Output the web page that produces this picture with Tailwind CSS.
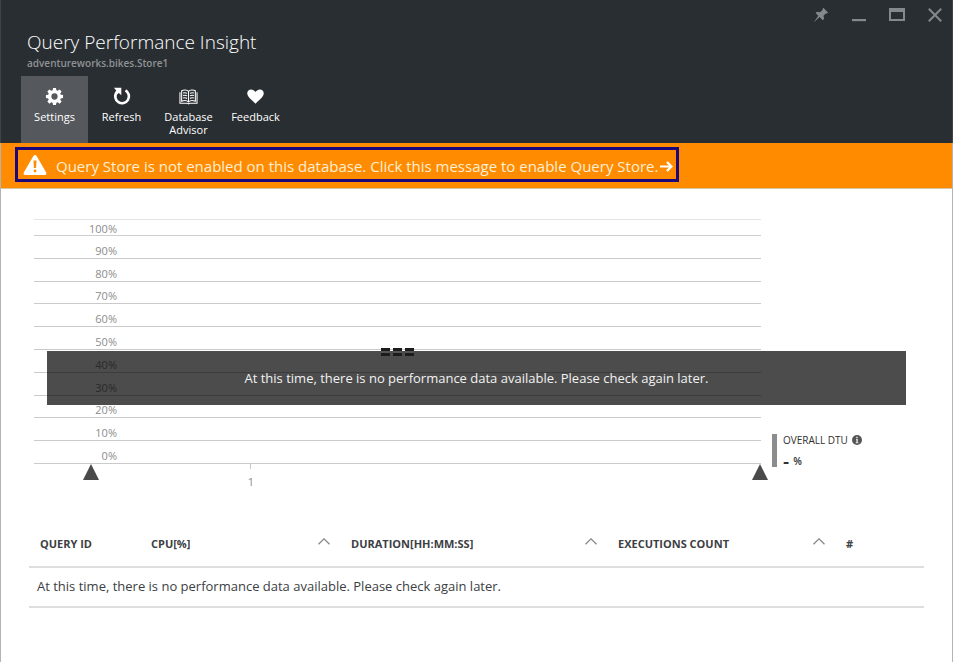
<!DOCTYPE html>
<html lang="en">
<head>
<meta charset="utf-8">
<title>Query Performance Insight</title>
<script src="https://cdn.jsdelivr.net/npm/@tailwindcss/browser@4"></script>
</head>
<body class="flex min-h-screen flex-col bg-white font-['Open_Sans','Noto_Sans',sans-serif] text-[13px] text-[#3c4043]">

<header class="relative border-x border-[#3f4447] bg-[#292e32] pl-5 pt-7 text-white">
  <div class="absolute right-[6px] top-1 flex items-center gap-4 text-[#85898c]">
    <button type="button" aria-label="Pin" class="flex size-[22px] items-center justify-center">
      <svg class="size-4" viewBox="0 0 16 16" fill="currentColor"><path d="M10.300.8 15.200 5.700l-1.500.8-.9-.1-2.300 2.400.6 3-1.300 1.400-3.200-3.200L.6 15.400l4.700-6.600L2.600 6.100 4 4.800l3 .5 2.600-2.400-.1-.9z"/></svg>
    </button>
    <button type="button" aria-label="Minimize" class="flex size-[22px] items-center justify-center">
      <svg class="size-4" viewBox="0 0 16 16" fill="currentColor"><path d="M1 12h14v2.200H1z"/></svg>
    </button>
    <button type="button" aria-label="Maximize" class="flex size-[22px] items-center justify-center">
      <svg class="size-4" viewBox="0 0 16 16" fill="currentColor" fill-rule="evenodd"><path d="M0 1h16v13H0zM2 5v7h12V5z"/></svg>
    </button>
    <button type="button" aria-label="Close" class="flex size-[22px] items-center justify-center">
      <svg class="size-4" viewBox="0 0 16 16" fill="none" stroke="currentColor" stroke-width="2"><path d="m1.800 1.800 12.400 12.400M14.200 1.800 1.800 14.200"/></svg>
    </button>
  </div>
  <h1 class="pl-[6px] text-[19px] font-light leading-7">Query Performance Insight</h1>
  <p class="pl-[6px] text-[10px] font-semibold leading-[14px] text-[#8f9396]">adventureworks.bikes.Store1</p>
  <nav class="mt-[6px] flex text-[11px] leading-[13px]">
    <button type="button" class="flex h-[67px] w-[67px] flex-col items-center gap-1 bg-[#55585c] pt-[11px]">
      <svg class="size-[19px]" viewBox="0 0 20 20" fill="currentColor" fill-rule="evenodd"><path d="M8.500 1h3l.5 2.500 1.300.5 2.100-1.400 2.100 2.100L16 6.800l.6 1.300 2.400.4v3l-2.400.5-.6 1.300 1.500 2-2.100 2.200-2.100-1.400-1.300.5-.5 2.400h-3L8 16.600l-1.300-.5-2.100 1.400-2.100-2.200 1.400-2-.5-1.300L1 11.500v-3l2.400-.4.5-1.300-1.400-2.100 2.100-2.100L6.700 4 8 3.500zM10 6.700a3.300 3.300 0 1 0 0 6.600 3.300 3.300 0 0 0 0-6.600z"/></svg>
      Settings
    </button>
    <button type="button" class="flex h-[67px] w-[67px] flex-col items-center gap-1 pt-[11px]">
      <svg class="size-[19px]" viewBox="0 0 20 20"><path d="M14.200 3.600A7.200 7.200 0 1 1 4.700 5.800" fill="none" stroke="currentColor" stroke-width="2.800"/><path d="M2 .9h7.800v7.800L7.300 6.300 4.900 8.200 2.800 6.200 4.500 3.800z" fill="currentColor"/></svg>
      Refresh
    </button>
    <button type="button" class="flex h-[67px] w-[67px] flex-col items-center gap-1 pt-[11px]">
      <svg class="size-[19px]" viewBox="0 0 20 20" fill="none" stroke="currentColor" stroke-width="1.100"><path d="M10 4.500C8.500 3 5 2.800 2.800 4v11c2.300-1 5.700-.8 7.200.7 1.500-1.500 4.900-1.700 7.200-.7V4C15 2.800 11.500 3 10 4.500zM10 4.500v11.200M1 5.500v11.500h7.500l1.500.7 1.500-.7H19v-11.500M4.300 6.300c1.500-.5 3-.4 4.200.4M4.300 9c1.500-.5 3-.4 4.200.4M4.300 11.700c1.500-.5 3-.4 4.200.4M15.700 6.300c-1.500-.5-3-.4-4.200.4M15.700 9c-1.500-.5-3-.4-4.200.4M15.700 11.700c-1.500-.5-3-.4-4.200.4"/></svg>
      Database Advisor
    </button>
    <button type="button" class="flex h-[67px] w-[67px] flex-col items-center gap-1 pt-[11px]">
      <svg class="size-[19px]" viewBox="0 0 20 20" fill="currentColor"><path d="M10 17.500C7 14.500 1.300 10.800 1.300 6.700 1.300 1.800 7.500 1.100 10 5.200c2.500-4.100 8.700-3.400 8.700 1.500 0 4.100-5.700 7.800-8.700 10.800z"/></svg>
      Feedback
    </button>
  </nav>
</header>

<main class="grow border-x border-[#b4b4b4]">
  <div class="border-b border-[#d9c3a0] bg-[#ff8c00] pb-[6px] pl-[14px] pt-1">
    <a href="#" class="inline-flex h-[35px] items-center border-[3px] border-[#1c0878] pl-[5px] pr-[3px] align-top text-[15px] text-[#ffeed6]">
      <svg class="h-5 w-6" viewBox="0 0 24 20" fill="#fff" fill-rule="evenodd"><path d="M12 0c.7 0 1.200.4 1.600 1l9.600 16.500c.6 1.200.1 2.500-1.300 2.500H2.100c-1.400 0-1.900-1.300-1.300-2.500L10.400 1c.4-.6.9-1 1.600-1zM10.500 5.500l.4 7.500h2.200l.4-7.500zM12 14.500a1.400 1.400 0 1 0 0 2.800 1.400 1.400 0 0 0 0-2.800z"/></svg>
      <span class="pl-[9px] pt-[3px]">Query Store is not enabled on this database. Click this message to enable Query Store.</span>
      <svg class="ml-[2px] mt-1 size-[13px]" viewBox="0 0 14 14" fill="none" stroke="#fff" stroke-width="2.400"><path d="M0 7h12M7.500 2.200 12.400 7l-4.900 4.800"/></svg>
    </a>
  </div>

  <section class="relative flex pl-[33px] pt-[30px] text-[11px] text-[#8c8c8c]" aria-label="Resource consumption">
    <div class="grow">
      <div class="flex h-[17px] items-end border-y border-[#cecece] border-t-[#e4e4e4]"><span class="w-[83px] text-right leading-[13px]">100%</span></div>
      <div class="grid h-[228px] grid-rows-10 *:flex *:items-end *:border-b *:border-[#cacaca] *:leading-[14px]">
        <div><span class="w-[83px] text-right">90%</span></div>
        <div><span class="w-[83px] text-right">80%</span></div>
        <div><span class="w-[83px] text-right">70%</span></div>
        <div><span class="w-[83px] text-right">60%</span></div>
        <div><span class="w-[83px] text-right">50%</span></div>
        <div><span class="w-[83px] text-right">40%</span></div>
        <div><span class="w-[83px] text-right">30%</span></div>
        <div><span class="w-[83px] text-right">20%</span></div>
        <div><span class="w-[83px] text-right">10%</span></div>
        <div><span class="w-[83px] text-right">0%</span></div>
      </div>
      <div class="-mr-[7px] flex pl-[49px]">
        <svg class="h-4 w-4 shrink-0" viewBox="0 0 16 16" fill="#4a4a4a"><path d="M8 0l8 16H0z"/></svg>
        <div class="grow-[152] basis-0"></div>
        <div class="flex w-0 flex-col items-center"><span class="h-[5px] w-px bg-[#c8c8c8]"></span><span class="pt-[6px] leading-[14px]">1</span></div>
        <div class="grow-[502] basis-0"></div>
        <svg class="h-4 w-4 shrink-0" viewBox="0 0 16 16" fill="#4a4a4a"><path d="M8 0l8 16H0z"/></svg>
      </div>
    </div>
    <div class="w-[191px] shrink-0 pl-[11px] pt-[215px]">
      <div class="h-[33px] border-l-[5px] border-[#8c8c8c] pl-[6px] text-[10px] text-[#303030]">
        <div class="flex items-center gap-1 leading-3">OVERALL DTU
          <svg class="size-[10px]" viewBox="0 0 10 10"><circle cx="5" cy="5" r="5" fill="#555"/><path d="M4.200 1.800h1.600v1.400H4.200zM4 4.100h1.800v3.100h.6v1H3.700v-1h.6V5.100H4z" fill="#ddd"/></svg>
        </div>
        <div class="flex items-center gap-1 pt-[7px] font-semibold leading-4"><span class="text-[19px]">-</span>%</div>
      </div>
    </div>
    <div class="absolute inset-x-[46px] top-[162px] flex h-[54px] items-center justify-center bg-black/70 pt-[2px] text-[13px] text-[#f2f2f2]">
      <p>At this time, there is no performance data available. Please check again later.</p>
    </div>
    <div class="absolute left-[40%] top-[159px] flex gap-[3px] *:h-[8px] *:w-[9px] *:border-y-[3px] *:border-[#1c1c1c] *:bg-[#555]" role="progressbar" aria-label="Loading"><span></span><span></span><span></span></div>
  </section>

  <div class="pl-7 pr-7 pt-[34px]">
    <table class="w-full table-fixed border-collapse text-left">
      <colgroup><col class="w-[111px]"><col class="w-[200px]"><col class="w-[267px]"><col class="w-[228px]"><col></colgroup>
      <thead>
        <tr class="h-[44px] border-b-2 border-[#dedede] text-[11px] *:pl-[11px] *:pr-[10px] *:font-bold">
          <th>QUERY ID</th>
          <th><div class="flex items-center justify-between">CPU[%]<svg class="mb-[6px] h-[7px] w-3" viewBox="0 0 12 7" fill="none" stroke="#888" stroke-width="1.300"><path d="M.5 6.300 6 .9l5.500 5.400"/></svg></div></th>
          <th><div class="flex items-center justify-between">DURATION[HH:MM:SS]<svg class="mb-[6px] h-[7px] w-3" viewBox="0 0 12 7" fill="none" stroke="#888" stroke-width="1.300"><path d="M.5 6.300 6 .9l5.500 5.400"/></svg></div></th>
          <th><div class="flex items-center justify-between">EXECUTIONS COUNT<svg class="mb-[6px] h-[7px] w-3" viewBox="0 0 12 7" fill="none" stroke="#888" stroke-width="1.300"><path d="M.5 6.300 6 .9l5.500 5.400"/></svg></div></th>
          <th>#</th>
        </tr>
      </thead>
      <tbody>
        <tr class="h-10 border-b-2 border-[#dedede]"><td colspan="5" class="pl-2">At this time, there is no performance data available. Please check again later.</td></tr>
      </tbody>
    </table>
  </div>
</main>
</body>
</html>
